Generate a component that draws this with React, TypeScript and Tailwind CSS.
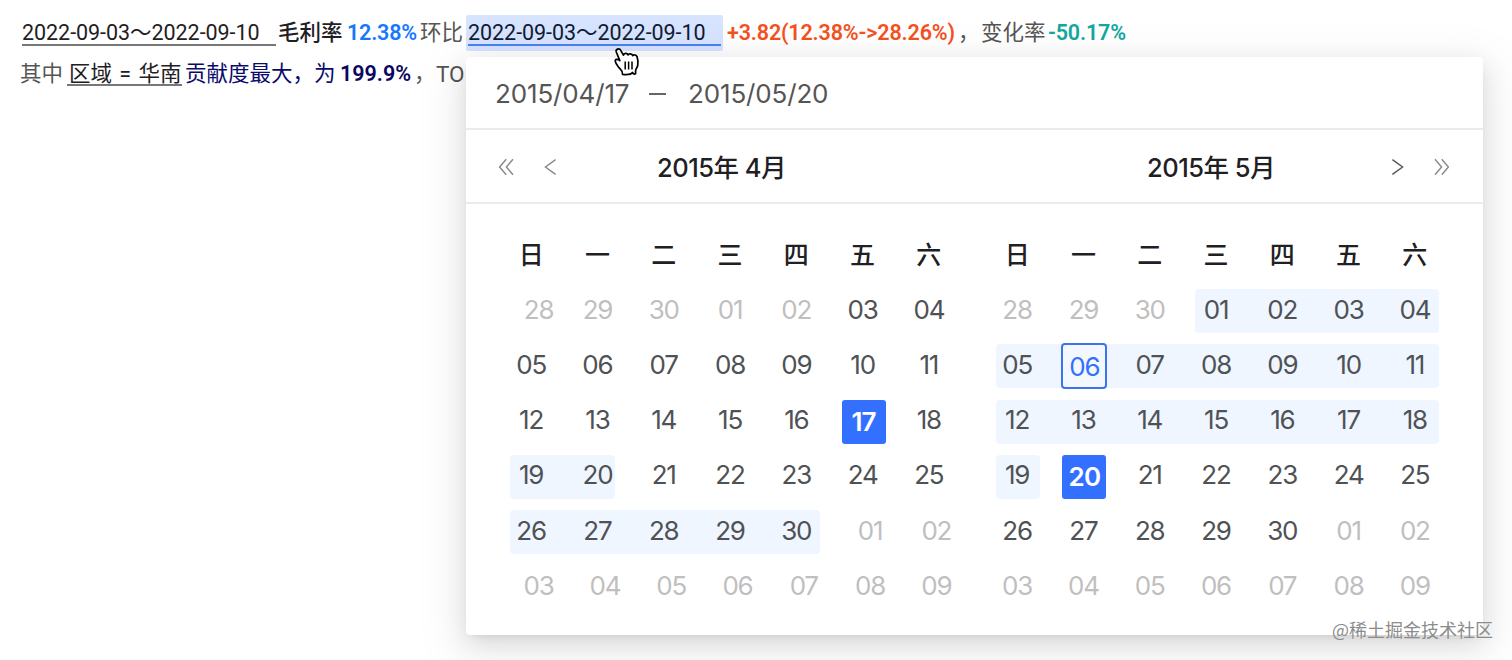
import clsx from "clsx";

type Day = {
  label: string;
  kind?: "muted" | "shifted" | "selected" | "today";
};

type Week = {
  days: Day[];
  band?: string;
};

const WEEKDAYS = ["日", "一", "二", "三", "四", "五", "六"];

const COLS = ["col-start-1", "col-start-2", "col-start-3", "col-start-4", "col-start-5", "col-start-6", "col-start-7"];

const days = (labels: string, kind?: Day["kind"]): Day[] => labels.split(" ").map((label) => ({ label, kind }));

const APRIL: Week[] = [
  { days: [...days("28", "shifted"), ...days("29 30 01 02", "muted"), ...days("03 04")] },
  { days: days("05 06 07 08 09 10 11") },
  { days: [...days("12 13 14 15 16"), ...days("17", "selected"), ...days("18")] },
  { days: days("19 20 21 22 23 24 25"), band: "col-start-1 col-end-3 ml-[12px] mr-[16px]" },
  { days: [...days("26 27 28 29 30"), ...days("01 02", "shifted")], band: "col-start-1 col-end-6 ml-[12px] mr-[9px]" },
  { days: days("03 04 05 06 07 08 09", "shifted") },
];

const MAY: Week[] = [
  { days: [...days("28 29 30", "muted"), ...days("01 02 03 04")], band: "col-start-4 col-end-8 ml-[12px] mr-[9px]" },
  { days: [...days("05"), ...days("06", "today"), ...days("07 08 09 10 11")], band: "col-start-1 col-end-8 ml-[12px] mr-[9px]" },
  { days: days("12 13 14 15 16 17 18"), band: "col-start-1 col-end-8 ml-[12px] mr-[9px]" },
  { days: [...days("19"), ...days("20", "selected"), ...days("21 22 23 24 25")], band: "col-start-1 col-end-2 ml-[12px] mr-[10px]" },
  { days: [...days("26 27 28 29 30"), ...days("01 02", "muted")] },
  { days: days("03 04 05 06 07 08 09", "muted") },
];

const DayCell = ({ day, col }: { day: Day; col: number }) => (
  <div
    className={clsx(
      "row-start-1 flex h-11 items-center justify-center text-[26px] leading-none tracking-[-1.2px]",
      COLS[col],
      day.kind === "muted" && "pb-[3px] text-[#bfbfbf]",
      day.kind === "shifted" && "pb-[3px] pl-[15px] text-[#bfbfbf]",
      !day.kind && "pb-[3px] text-[#4f5255]",
    )}
  >
    {day.kind === "selected" ? (
      <span className="ml-[2px] flex h-11 w-11 items-center justify-center rounded-[3px] bg-[#3370ff] font-semibold tracking-[-0.8px] text-white">
        {day.label}
      </span>
    ) : day.kind === "today" ? (
      <span className="ml-[2px] flex h-[46px] w-[46px] shrink-0 items-center justify-center rounded-[4px] border-2 border-[#3b74ec] bg-[#f3f8ff] pt-px text-[#3370ff]">
        {day.label}
      </span>
    ) : (
      day.label
    )}
  </div>
);

const Month = ({ weeks }: { weeks: Week[] }) => (
  <div className="w-[464px]">
    <div className="grid h-[55px] grid-cols-7">
      {WEEKDAYS.map((name) => (
        <div key={name} className="flex items-center justify-center text-[25px] font-medium text-[#1f2023]">
          {name}
        </div>
      ))}
    </div>
    {weeks.map((week, i) => (
      <div key={i} className="grid h-[55.25px] grid-cols-7 items-center">
        {week.band && <div className={clsx("row-start-1 h-11 rounded-[4px] bg-[#eff6ff]", week.band)} />}
        {week.days.map((day, col) => (
          <DayCell key={col} day={day} col={col} />
        ))}
      </div>
    ))}
  </div>
);

const Chevron = ({ double, flip, className }: { double?: boolean; flip?: boolean; className?: string }) => (
  <svg
    width="18"
    height="18"
    viewBox="0 0 18 18"
    fill="none"
    stroke="currentColor"
    strokeWidth="1.4"
    className={clsx("mt-[2px]", flip && "-scale-x-100", className)}
  >
    {double ? <path d="M9.2 1.2 2.6 9l6.6 7.8M16 1.2 9.4 9l6.6 7.8" /> : <path d="M14.6 1.6 4.4 9l10.2 7.4" />}
  </svg>
);

const HandCursor = () => (
  <svg width="28" height="31" viewBox="0 0 28 31" className="absolute left-[613px] top-[46px] z-20">
    <path
      d="M6.8 14.600 3.300 6C2.300 3.200 6.200 1.600 7.700 4.300l2.700 4.900c.5-2.300 3.900-2.300 4.700-.3.900-1.700 3.900-1.300 4.500.7 1.300-1.300 3.800-.6 4.500 1.300.9 2.600 1.100 5.700.6 8.600-.3 1.900-1.900 3.200-2.100 5.100v3.200c-1.500.6-2.500.1-3.200-1.300-1.400 2.500-5.800 2.300-9.900 1.900.2-4.200-2.300-5.200-4.100-7.400C4.100 19.300 2.600 17.400 2.300 15.400c-.3-2.300 2.500-2.700 4.500-.8Z"
      fill="#fff"
      stroke="#000"
      strokeWidth="1.7"
      strokeLinejoin="round"
    />
    <path d="M12.200 15.500v8M15.600 15.500v8M19 15.500v8" stroke="#000" strokeWidth="1.500" />
  </svg>
);

const Picker = () => (
  <div className="absolute left-[466px] top-[57px] z-10 h-[578px] w-[1017px] rounded-[4px] bg-white font-[Inter,'Noto_Sans_CJK_SC',sans-serif] shadow-[0_12px_46px_12px_rgba(0,0,0,0.06),0_8px_26px_0_rgba(0,0,0,0.1),0_5px_10px_-6px_rgba(0,0,0,0.12)]">
    <div className="flex h-[73px] items-center border-b-2 border-[#ebebeb] pl-[29px] pt-[2px] text-[26px] text-[#555]">
      <span className="w-[154px] tracking-[-0.15px]">2015/04/17</span>
      <span className="h-[2px] w-[17px] bg-[#666]" />
      <span className="ml-[22px] tracking-[-0.15px]">2015/05/20</span>
    </div>
    <div className="flex h-[74px] items-center border-b-2 border-[#ebebeb] pl-[31px] pr-[32px] text-[25.500px] font-medium text-[#1f2023]">
      <Chevron double className="text-[#888]" />
      <Chevron className="ml-[26px] text-[#888]" />
      <span className="ml-[98px] w-[490px] whitespace-nowrap pt-[5px] tracking-[-0.5px]">2015年 4月</span>
      <span className="whitespace-nowrap pt-[5px] tracking-[-0.5px]">2015年 5月</span>
      <Chevron flip className="ml-auto text-[#555]" />
      <Chevron double flip className="ml-[26px] text-[#888]" />
    </div>
    <div className="flex gap-[22px] pl-8 pt-[24.500px]">
      <Month weeks={APRIL} />
      <Month weeks={MAY} />
    </div>
  </div>
);

const Summary = () => (
  <div className="whitespace-nowrap font-[Roboto,'Noto_Sans_CJK_SC',sans-serif] text-[21.500px] leading-[26px] text-[#555]">
    <div className="flex h-[36px] translate-y-[15px] items-center">
      <span className="ml-[22px] h-[26px] w-[254px] border-b-2 border-[#777] tracking-[-0.05px] text-[#1f2023]">2022-09-03～2022-09-10</span>
      <span className="ml-[2px] w-[69px] font-medium text-[#1f2023]">毛利率</span>
      <span className="w-[73px] font-semibold tracking-[-0.2px] text-[#1677ff]">12.38%</span>
      <span className="w-[46px]">环比</span>
      <span className="flex h-[36px] w-[257px] items-center rounded-[2px] bg-[#d6e4ff] pl-[2px]">
        <span className="h-[26px] w-[253px] border-b-2 border-[#4c80f5] tracking-[-0.05px] text-[#111b33]">2022-09-03～2022-09-10</span>
      </span>
      <span className="ml-[4px] w-[231px] font-semibold tracking-[-0.15px] text-[#f4511e]">+3.82(12.38%-&gt;28.26%)</span>
      <span className="w-[23px]">，</span>
      <span className="w-[67px]">变化率</span>
      <span className="font-semibold tracking-[-0.15px] text-[#13a8a0]">-50.17%</span>
    </div>
    <div className="flex translate-y-[19px] pt-[6px]">
      <span className="ml-[20px] w-[47px]">其中</span>
      <span className="h-[25px] w-[115px] border-b-2 border-[#777] pl-[2px] text-[#1f2023] [word-spacing:2px]">区域 = 华南</span>
      <span className="ml-[3px] w-[129px] text-[#0a0a6b]">贡献度最大，</span>
      <span className="w-[26px] text-[#0a0a6b]">为</span>
      <span className="w-[74px] font-semibold text-[#0a0560]">199.9%</span>
      <span className="w-[22px]">，</span>
      <span className="text-[22.500px]">TO</span>
    </div>
  </div>
);

const App = () => {
  return (
    <main className="relative h-[660px] w-full overflow-hidden bg-white">
      <Summary />
      <Picker />
      <HandCursor />
      <div className="absolute bottom-[19px] right-[19px] z-20 whitespace-nowrap font-['Noto_Sans_CJK_SC',sans-serif] text-[18px] leading-[24px] text-[#8c8c8c]">
        @稀土掘金技术社区
      </div>
    </main>
  );
};

export default App;
